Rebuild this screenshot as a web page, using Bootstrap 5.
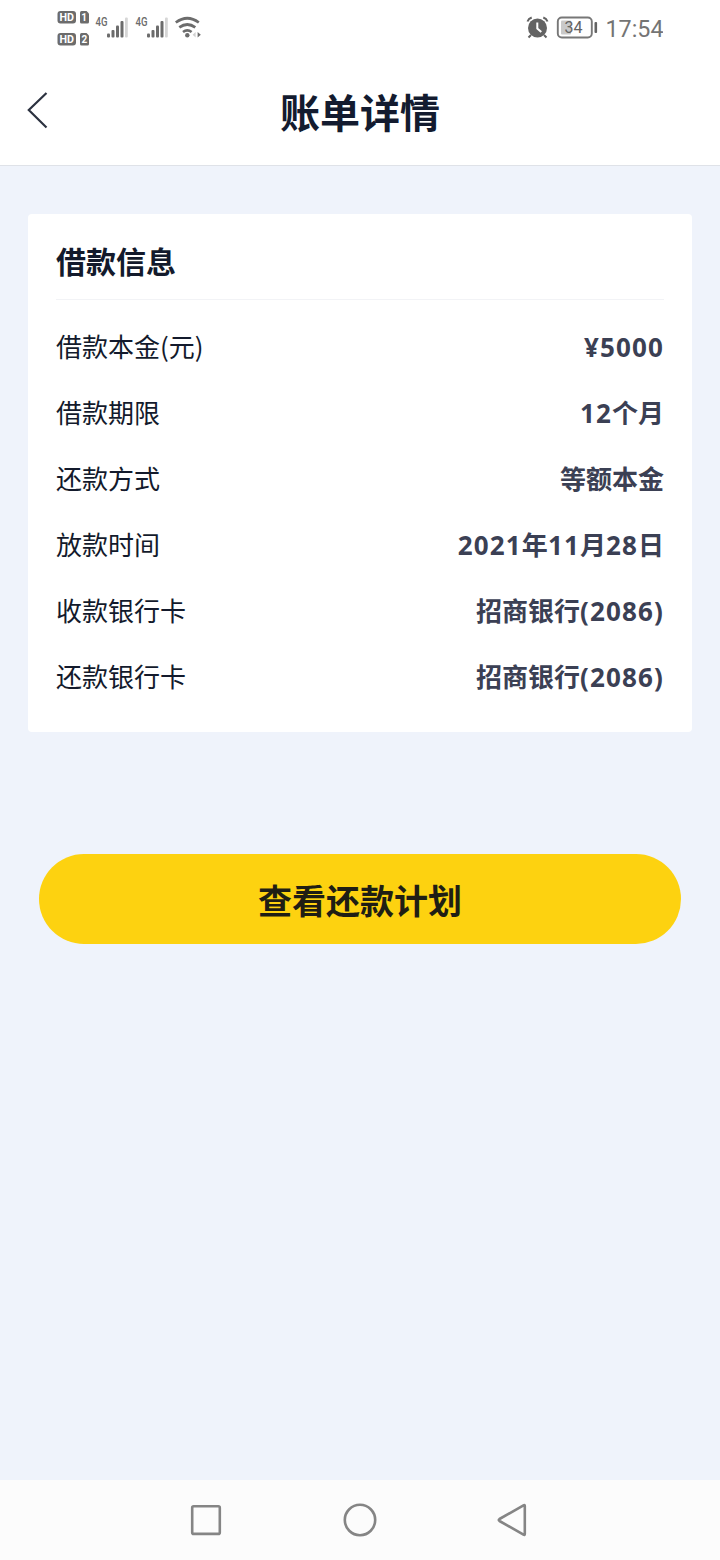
<!DOCTYPE html>
<html lang="zh-CN">
<head>
<meta charset="utf-8">
<meta name="viewport" content="width=device-width, initial-scale=1">
<title>账单详情</title>
<link rel="stylesheet" href="https://cdn.jsdelivr.net/npm/bootstrap@5.3.0/dist/css/bootstrap.min.css">
<style>
  body { font-family: "Noto Sans CJK SC", sans-serif; background: #eff3fb; color: #131a2c; height: 1560px; overflow: hidden; }
  svg { display: block; flex: none; }
  .status-bar { height: 56px; padding: 0 57px; }
  .status-bar text { font-family: Roboto, sans-serif; }
  .title-bar { height: 110px; border-bottom: 1px solid #dfe2e8; }
  .title-bar h1 { font-size: 40px; line-height: 60px; color: #131b2f; }
  .side { width: 80px; }
  .info-card { margin: 48px 28px 0; height: 518px; padding: 0 28px; border: 0; border-radius: 4px; }
  .info-card h2 { font-size: 30px; line-height: 44px; padding: 24px 0 17px; margin-bottom: 13px; border-bottom: 1px solid #f2f3f6; color: #131a2c; }
  .info-row { height: 66px; font-size: 26px; line-height: 38px; }
  .info-value { color: #3b4054; font-weight: 700; }
  .digits { font-family: "Noto Sans", sans-serif; letter-spacing: 1.15px; }
  .plan-btn { margin: 122px 39px 0; height: 90px; font-size: 34px; background: #fdd210; color: #1f1e14; }
  .plan-btn:hover { background: #f5ca08; color: #1f1e14; }
  .system-nav { height: 80px; background: #fcfcfc; gap: 118px; }
</style>
</head>
<body class="d-flex flex-column">
  <div class="status-bar bg-white d-flex justify-content-between">
    <svg width="146" height="56" viewBox="57 0 146 56" fill="#6c6c6c">
      <rect x="57.500" y="11" width="18.500" height="12.500" rx="3"/>
      <path d="M81.500 11h5l2.500 2.500v8.500q0 1.500-1.500 1.500h-6q-1.500 0-1.500-1.500v-9.500q0-1.500 1.500-1.500z"/>
      <rect x="57.500" y="33" width="18.500" height="12.500" rx="3"/>
      <path d="M81.500 33h5l2.500 2.500v8.500q0 1.500-1.500 1.500h-6q-1.500 0-1.500-1.500v-9.500q0-1.500 1.500-1.500z"/>
      <g fill="#fff" font-size="11" font-weight="700">
        <text x="59.500" y="21.200" textLength="14.500" lengthAdjust="spacingAndGlyphs">HD</text>
        <text x="59.500" y="43.200" textLength="14.500" lengthAdjust="spacingAndGlyphs">HD</text>
        <text x="81.300" y="21" font-size="10">1</text>
        <text x="81.500" y="43" font-size="10">2</text>
      </g>
      <g id="signal">
        <text x="95.500" y="26" font-size="12.500" font-weight="500" textLength="12" lengthAdjust="spacingAndGlyphs">4G</text>
        <rect x="107" y="33.500" width="3" height="4" rx="1"/>
        <rect x="111.500" y="30" width="3" height="7.500" rx="1"/>
        <rect x="116" y="25.500" width="3" height="12" rx="1"/>
        <rect x="120.500" y="21" width="3" height="16.500" rx="1"/>
        <rect x="125" y="17.500" width="2.800" height="20" rx="1" fill="#d6d6d6"/>
      </g>
      <use href="#signal" x="40"/>
      <g fill="none" stroke="#6c6c6c" stroke-width="2.700">
        <path d="M175.800 22.500q11.500-8.500 23 0M179.300 27.400q8-5.800 16 0M183 32q4.300-3.200 8.600 0"/>
      </g>
      <circle cx="187.300" cy="35.300" r="2.200"/>
      <path d="M197.600 32l3.200 2.700-3.200 2.700z"/><path d="M195.600 32l-3 2.700 3 2.700z" fill="#d0d0d0"/>
    </svg>
    <svg width="138" height="56" viewBox="525 0 138 56" fill="#636363">
      <circle cx="537.500" cy="28" r="9.500"/>
      <g fill="none" stroke="#636363" stroke-width="2">
        <path d="M527.500 21.500q1-2.800 4.200-4M543.300 17.500q3.200 1.200 4.200 4M531 35l-2.500 2.500M544 35l2.500 2.500"/>
      </g>
      <path d="M537.300 22.500v6l4 3.600" fill="none" stroke="#fff" stroke-width="2"/>
      <rect x="561" y="20.500" width="10" height="14" rx="1" fill="#c9c9c9"/>
      <rect x="557.800" y="17.500" width="34" height="20" rx="4" fill="none" stroke="#777" stroke-width="1.900"/>
      <rect x="594.500" y="22" width="2.600" height="11" rx="1"/>
      <text x="564.500" y="33.200" font-size="17" textLength="18" lengthAdjust="spacingAndGlyphs">34</text>
      <text x="605.500" y="36.800" font-size="23.500" fill="#747474" textLength="58" lengthAdjust="spacingAndGlyphs">17:54</text>
    </svg>
  </div>

  <header class="title-bar bg-white d-flex align-items-center justify-content-between">
    <div class="side">
      <svg width="80" height="50" viewBox="0 86 80 50" fill="none" stroke="#2c3240" stroke-width="2.200"><path d="M46.500 93L28.800 110L46.500 127.500"/></svg>
    </div>
    <h1 class="m-0 fw-bold">账单详情</h1>
    <div class="side"></div>
  </header>

  <main class="flex-grow-1 d-flex flex-column">
    <section class="card info-card">
      <h2 class="fw-bold">借款信息</h2>
      <div class="info-row d-flex align-items-center justify-content-between"><span>借款本金(元)</span><span class="info-value"><span class="digits">¥5000</span></span></div>
      <div class="info-row d-flex align-items-center justify-content-between"><span>借款期限</span><span class="info-value"><span class="digits">12</span>个月</span></div>
      <div class="info-row d-flex align-items-center justify-content-between"><span>还款方式</span><span class="info-value">等额本金</span></div>
      <div class="info-row d-flex align-items-center justify-content-between"><span>放款时间</span><span class="info-value"><span class="digits">2021</span>年<span class="digits">11</span>月<span class="digits">28</span>日</span></div>
      <div class="info-row d-flex align-items-center justify-content-between"><span>收款银行卡</span><span class="info-value">招商银行<span class="digits">(2086)</span></span></div>
      <div class="info-row d-flex align-items-center justify-content-between"><span>还款银行卡</span><span class="info-value">招商银行<span class="digits">(2086)</span></span></div>
    </section>
    <button type="button" class="btn plan-btn rounded-pill border-0 fw-bold">查看还款计划</button>
  </main>

  <nav class="system-nav d-flex align-items-center justify-content-center">
    <svg width="36" height="36" viewBox="188 1502 36 36" fill="none" stroke="#858585" stroke-width="2.600"><rect x="192.200" y="1506.300" width="27.600" height="27.600" rx="1.500"/></svg>
    <svg width="36" height="36" viewBox="342 1502 36 36" fill="none" stroke="#858585" stroke-width="2.600"><circle cx="360" cy="1520" r="15.200"/></svg>
    <svg width="36" height="36" viewBox="496 1502 36 36" fill="none" stroke="#858585" stroke-width="2.600" stroke-linejoin="round"><path d="M523.500 1505.300q1.300-.7 1.300.8v27.800q0 1.500-1.300.8l-24-13.700q-1.500-1 0-2z"/></svg>
  </nav>
<script src="https://cdn.jsdelivr.net/npm/bootstrap@5.3.0/dist/js/bootstrap.bundle.min.js"></script>
</body>
</html>
